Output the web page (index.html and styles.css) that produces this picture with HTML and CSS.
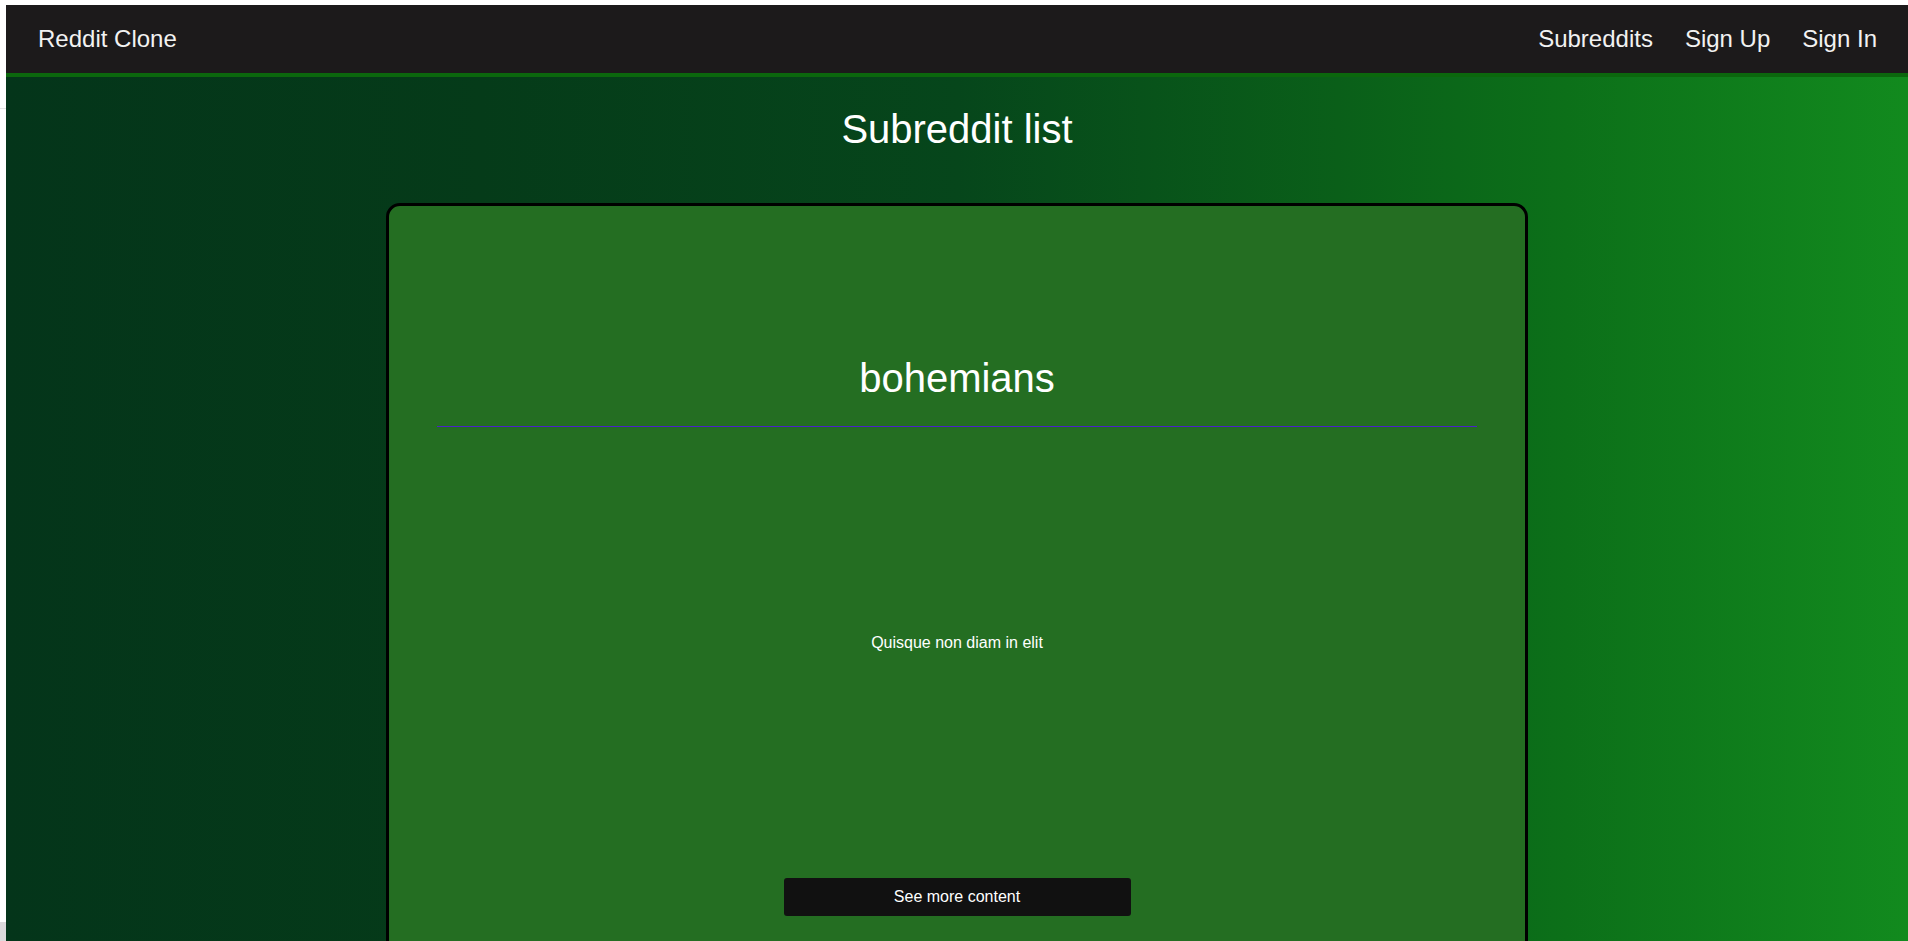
FILE: index.html
```html
<!DOCTYPE html>
<html lang="en">
<head>
<meta charset="utf-8">
<title>Reddit Clone</title>
<link rel="stylesheet" href="styles.css">
</head>
<body>
  <div class="gutter">
    <div class="gutter-line"></div>
    <div class="gutter-box"></div>
  </div>
  <div class="page">
    <nav class="navbar">
      <a class="brand" href="#">Reddit Clone</a>
      <div class="nav-links">
        <a href="#">Subreddits</a>
        <a href="#">Sign Up</a>
        <a href="#">Sign In</a>
      </div>
    </nav>
    <main class="content">
      <h1 class="page-title">Subreddit list</h1>
      <section class="card">
        <h2 class="card-title">bohemians</h2>
        <hr class="divider">
        <p class="card-text">Quisque non diam in elit</p>
        <button class="more-btn" type="button">See more content</button>
      </section>
    </main>
  </div>
</body>
</html>
```

FILE: styles.css
```css
html, body {
  margin: 0;
  padding: 0;
  background: #ffffff;
  height: 100%;
  overflow: hidden;
}

body {
  display: flex;
  font-family: "Liberation Sans", Arial, sans-serif;
  padding-top: 5px;
  box-sizing: border-box;
}

.gutter {
  width: 6px;
  flex: 0 0 6px;
  display: flex;
  flex-direction: column;
}

.gutter-line {
  margin-top: 103px;
  height: 1px;
  background: #e4e4e4;
}

.gutter-box {
  margin-top: 813px;
  flex: 1;
  background: #dcdadc;
}

.page {
  flex: 1;
  display: flex;
  flex-direction: column;
  min-width: 0;
}

.navbar {
  height: 68px;
  background: #1c1a1b;
  border-bottom: 4px solid #0b670d;
  display: flex;
  align-items: center;
  justify-content: space-between;
  padding: 0 31px 0 32px;
  flex: 0 0 auto;
}

.navbar a {
  color: #f2f2f2;
  text-decoration: none;
}

.brand {
  font-size: 24px;
}

.nav-links {
  display: flex;
  gap: 32px;
  font-size: 24px;
}

.content {
  flex: 1;
  background: linear-gradient(90deg, #04351a 0%, #053b19 25%, #06461b 50%, #0a5f19 70%, #0c7019 82%, #128a1e 100%);
  display: flex;
  flex-direction: column;
  align-items: center;
  overflow: hidden;
}

.page-title {
  margin: 29px 0 0;
  font-size: 40px;
  font-weight: normal;
  line-height: 46px;
  color: #ffffff;
}

.card {
  margin-top: 51px;
  width: 60%;
  min-height: 900px;
  box-sizing: border-box;
  background: #246e22;
  border: 3px solid #000000;
  border-radius: 14px;
  padding: 0 48px;
  display: flex;
  flex-direction: column;
  align-items: center;
  flex: 0 0 auto;
}

.card-title {
  margin: 149px 0 0;
  font-size: 40px;
  font-weight: normal;
  line-height: 46px;
  color: #ffffff;
}

.divider {
  align-self: stretch;
  margin: 25px 0 0;
  border: 0;
  height: 1px;
  background: #4a22c8;
}

.card-text {
  margin: 207px 0 0;
  font-size: 16px;
  line-height: 18px;
  color: #ffffff;
}

.more-btn {
  margin-top: 226px;
  width: 347px;
  height: 38px;
  background: #111111;
  color: #ffffff;
  border: 0;
  border-radius: 3px;
  font-family: "Liberation Sans", Arial, sans-serif;
  font-size: 16px;
  cursor: pointer;
}
```
